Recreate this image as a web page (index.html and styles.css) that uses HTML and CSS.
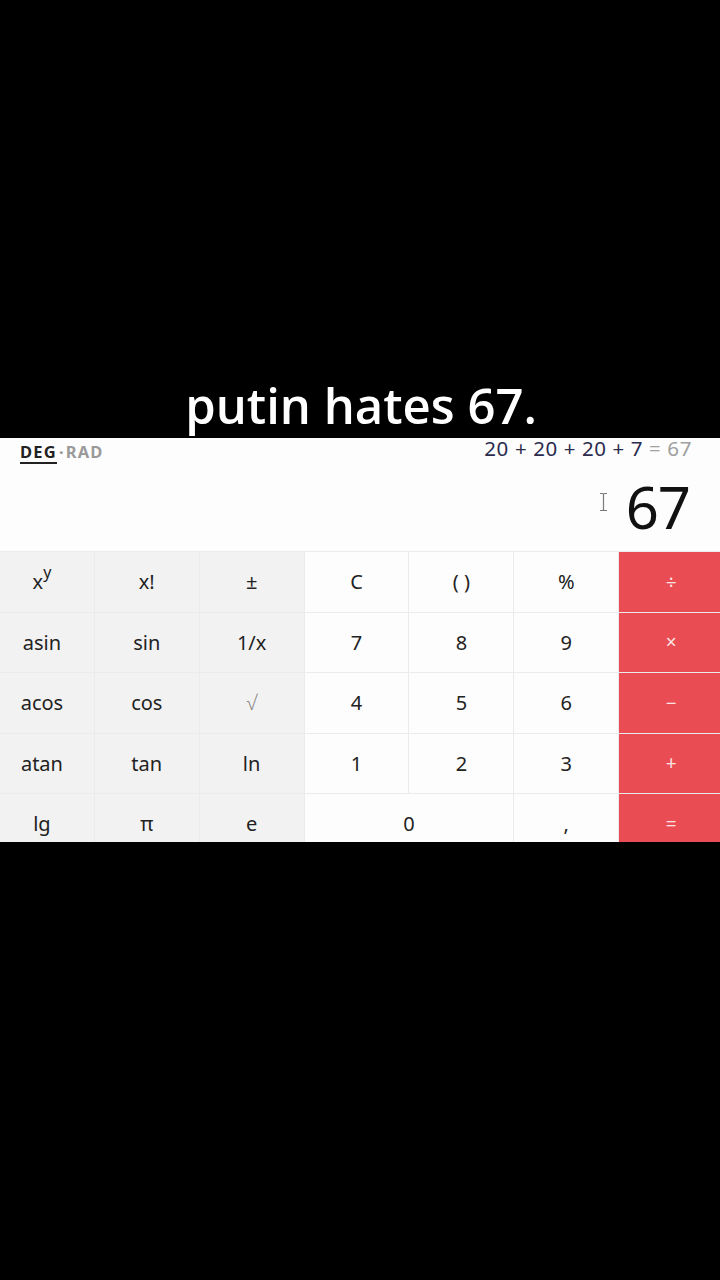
FILE: index.html
```html
<!DOCTYPE html>
<html lang="en">
<head>
<meta charset="utf-8">
<title>Calculator</title>
<link rel="stylesheet" href="styles.css">
</head>
<body>
<div class="screen">
  <div class="caption-area">
    <p class="caption">putin hates 67.</p>
  </div>

  <section class="calc">
    <div class="display">
      <div class="topline">
        <div class="mode"><span class="mode-on">DEG</span><span class="mode-sep">·</span><span class="mode-off">RAD</span></div>
        <div class="expr">20 + 20 + 20 + 7 <span class="expr-result">= 67</span></div>
      </div>
      <div class="result">
        <svg class="ibeam" width="9" height="20" viewBox="0 0 9 20" aria-hidden="true">
          <path d="M1 1.5h2.5M5.5 1.5H8M4.5 2v16M1 18.5h2.5M5.5 18.5H8M3.5 1.5q1 0 1 1M5.5 1.5q-1 0-1 1M3.5 18.5q1 0 1-1M5.5 18.5q-1 0-1-1" fill="none" stroke="#7a7a7a" stroke-width="1.2"/>
        </svg>
        <span class="value">67</span>
      </div>
    </div>

    <div class="keys">
      <div class="key sci">x<sup>y</sup></div>
      <div class="key sci">x!</div>
      <div class="key sci">±</div>
      <div class="key num">C</div>
      <div class="key num">( )</div>
      <div class="key num">%</div>
      <div class="key op">÷</div>

      <div class="key sci">asin</div>
      <div class="key sci">sin</div>
      <div class="key sci">1/x</div>
      <div class="key num">7</div>
      <div class="key num">8</div>
      <div class="key num">9</div>
      <div class="key op">×</div>

      <div class="key sci">acos</div>
      <div class="key sci">cos</div>
      <div class="key sci root">√</div>
      <div class="key num">4</div>
      <div class="key num">5</div>
      <div class="key num">6</div>
      <div class="key op">−</div>

      <div class="key sci">atan</div>
      <div class="key sci">tan</div>
      <div class="key sci">ln</div>
      <div class="key num">1</div>
      <div class="key num">2</div>
      <div class="key num">3</div>
      <div class="key op">+</div>

      <div class="key sci">lg</div>
      <div class="key sci">π</div>
      <div class="key sci">e</div>
      <div class="key num wide">0</div>
      <div class="key num">,</div>
      <div class="key op">=</div>
    </div>
  </section>
</div>
</body>
</html>
```

FILE: styles.css
```css
html, body {
  margin: 0;
  padding: 0;
  background: #000;
}

.screen {
  width: 720px;
  height: 1280px;
  background: #000;
  overflow: hidden;
}

/* Caption over the black top band */
.caption-area {
  height: 438px;
  display: flex;
  align-items: flex-end;
  justify-content: center;
}

.caption {
  margin: 0 0 3px 2px;
  color: #fff;
  font-family: "Open Sans", "Noto Sans", sans-serif;
  font-weight: 600;
  font-size: 49px;
  line-height: 60px;
  letter-spacing: 0;
}

/* Calculator panel */
.calc {
  height: 404px;
  background: #fdfdfd;
  font-family: "Noto Sans", "Open Sans", sans-serif;
}

.display {
  height: 114px;
  display: flex;
  flex-direction: column;
  box-sizing: border-box;
  border-bottom: 1px solid #ececec;
}

.topline {
  display: flex;
  justify-content: space-between;
  align-items: flex-start;
  height: 34px;
}

.mode {
  margin: 3px 0 0 20px;
  font-size: 16.5px;
  font-weight: 700;
  line-height: 22px;
  letter-spacing: 1.2px;
}

.mode-on {
  color: #222;
  display: inline-block;
  border-bottom: 2px solid #222;
  line-height: 21px;
  margin-right: -1px;
}

.mode-sep {
  color: #9a9a9a;
  margin: 0 1px 0 3px;
}

.mode-off {
  color: #9a9a9a;
}

.expr {
  margin: -2px 28px 0 0;
  font-size: 20.5px;
  line-height: 24px;
  color: #2b2b4e;
  letter-spacing: 0.6px;
}

.expr-result {
  color: #a0a0a0;
}

.result {
  flex: 1;
  display: flex;
  justify-content: flex-end;
  align-items: center;
  padding-right: 30px;
  padding-bottom: 10px;
}

.ibeam {
  margin: -10px 18px 0 0;
}

.value {
  font-size: 58px;
  line-height: 64px;
  color: #111;
  letter-spacing: -1px;
}

/* Keypad: the last row is cut by the bottom edge of the panel */
.keys {
  width: 733px;
  height: 290px;
  overflow: hidden;
  margin-left: -10px;
  display: grid;
  grid-template-columns: repeat(7, 1fr);
  grid-auto-rows: 59.5px;
  gap: 1px;
  background: #ebebeb;
}

.key {
  display: flex;
  align-items: center;
  justify-content: center;
  font-size: 20px;
  color: #222;
}

.key.sci {
  background: #f2f2f2;
}

.key.num {
  background: #fdfdfd;
}

.key.wide {
  grid-column: span 2;
}

.key.op {
  background: #e94c52;
  color: #fbe3e4;
  font-size: 19px;
}

.key.root {
  color: #777;
  font-weight: 300;
}

.key sup {
  font-size: 16px;
  line-height: 0;
  position: relative;
  top: -10px;
  vertical-align: baseline;
}
```
